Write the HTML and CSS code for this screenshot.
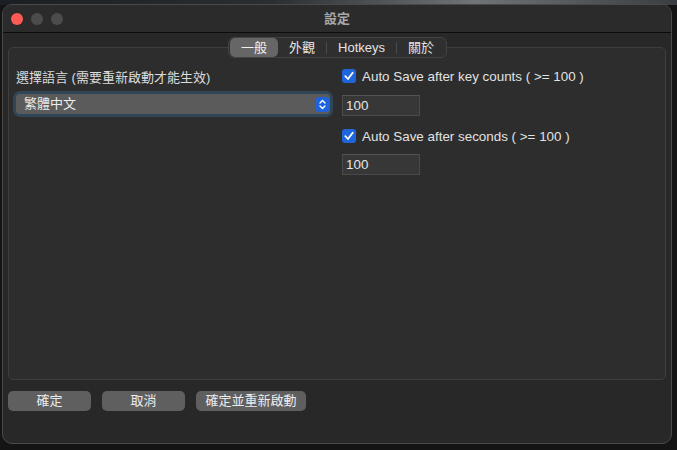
FILE: index.html
```html
<!DOCTYPE html>
<html lang="zh-Hant">
<head>
<meta charset="utf-8">
<title>設定</title>
<link rel="stylesheet" href="styles.css">
</head>
<body>
<div class="desktop">
  <div class="window">
    <div class="titlebar">
      <div class="lights">
        <span class="light red"></span>
        <span class="light grey"></span>
        <span class="light grey"></span>
      </div>
      <div class="title">設定</div>
    </div>
    <div class="content">
      <div class="tabs">
        <span class="tab active">一般</span>
        <span class="tab">外觀</span>
        <span class="sep"></span>
        <span class="tab">Hotkeys</span>
        <span class="sep"></span>
        <span class="tab">關於</span>
      </div>
      <div class="group">
        <div class="col-left">
          <div class="label">選擇語言 (需要重新啟動才能生效)</div>
          <div class="select">
            <span class="select-text">繁體中文</span>
            <span class="stepper">
              <svg width="13" height="15" viewBox="0 0 13 15">
                <rect x="0" y="0" width="13" height="15" rx="3" fill="#1f63dc"/>
                <path d="M4 6 L6.5 3.5 L9 6" fill="none" stroke="#fff" stroke-width="1.4" stroke-linecap="round" stroke-linejoin="round"/>
                <path d="M4 9 L6.5 11.5 L9 9" fill="none" stroke="#fff" stroke-width="1.4" stroke-linecap="round" stroke-linejoin="round"/>
              </svg>
            </span>
          </div>
        </div>
        <div class="col-right">
          <label class="check-row">
            <span class="checkbox">
              <svg width="14" height="14" viewBox="0 0 14 14">
                <rect x="0" y="0" width="14" height="14" rx="3" fill="#1f66dc"/>
                <path d="M3.3 7.2 L6 10 L10.7 3.8" fill="none" stroke="#fff" stroke-width="1.8" stroke-linecap="round" stroke-linejoin="round"/>
              </svg>
            </span>
            <span>Auto Save after key counts ( &gt;= 100 )</span>
          </label>
          <div class="field first">100</div>
          <label class="check-row second">
            <span class="checkbox">
              <svg width="14" height="14" viewBox="0 0 14 14">
                <rect x="0" y="0" width="14" height="14" rx="3" fill="#1f66dc"/>
                <path d="M3.3 7.2 L6 10 L10.7 3.8" fill="none" stroke="#fff" stroke-width="1.8" stroke-linecap="round" stroke-linejoin="round"/>
              </svg>
            </span>
            <span>Auto Save after seconds ( &gt;= 100 )</span>
          </label>
          <div class="field">100</div>
        </div>
      </div>
      <div class="buttons">
        <button class="btn w83">確定</button>
        <button class="btn w83">取消</button>
        <button class="btn w110">確定並重新啟動</button>
      </div>
    </div>
  </div>
</div>
</body>
</html>
```

FILE: styles.css
```css
* { box-sizing: border-box; }
html, body {
  margin: 0;
  padding: 0;
  width: 677px;
  height: 450px;
  overflow: hidden;
  background: #141414;
  font-family: "Liberation Sans", "Noto Sans CJK TC", sans-serif;
  font-size: 13px;
  color: #dedede;
}
.desktop {
  width: 677px;
  height: 450px;
  padding: 4px 0 0 2px;
  background: linear-gradient(90deg, #1b1f24 0%, #2a2d31 40%, #6f7479 70%, #3a3d41 100%) top / 100% 5px no-repeat, #141414;
}
.window {
  width: 670px;
  height: 440px;
  background: #282828;
  border-radius: 10px;
  border: 1px solid #4a4a4a;
  overflow: hidden;
  display: flex;
  flex-direction: column;
}
.titlebar {
  height: 28px;
  flex: none;
  background: #2b2b2b;
  border-bottom: 1px solid #0c0c0c;
  display: flex;
  align-items: center;
  position: relative;
}
.lights {
  display: flex;
  gap: 8px;
  padding-left: 8px;
  padding-top: 0;
}
.light {
  width: 12px;
  height: 12px;
  border-radius: 50%;
  display: block;
}
.light.red { background: #fe5b55; }
.light.grey { background: #4c4c4c; }
.title {
  position: absolute;
  left: 0;
  right: 0;
  top: 0;
  bottom: 2px;
  display: flex;
  align-items: center;
  justify-content: center;
  color: #a9a9a9;
  font-size: 13px;
  font-weight: 600;
}
.content {
  flex: 1;
  display: flex;
  flex-direction: column;
  padding: 4px 5px 0 5px;
}
.tabs {
  align-self: center;
  position: relative;
  z-index: 1;
  display: flex;
  align-items: center;
  height: 21px;
  padding: 0 1px;
  background: #2f2f2f;
  border: 1px solid #434343;
  border-radius: 6px;
  margin-left: 1px;
}
.tab {
  height: 19px;
  line-height: 19px;
  padding: 0 11px;
  color: #e4e4e4;
  font-size: 13px;
  border-radius: 5px;
}
.tab.active {
  background: #666666;
  color: #f0f0f0;
}
.sep {
  width: 1px;
  height: 12px;
  background: #4a4a4a;
}
.group {
  margin-top: -11px;
  height: 333px;
  background: #2d2d2d;
  border: 1px solid #3e3e3e;
  border-radius: 5px;
  display: grid;
  grid-template-columns: 326px 1fr;
  padding: 22px 0 0 7px;
}
.label {
  height: 16px;
  line-height: 16px;
  color: #dcdcdc;
  white-space: nowrap;
}
.select {
  margin-top: 8px;
  width: 314px;
  height: 20px;
  background: #5b5b5b;
  border-radius: 4px;
  box-shadow: 0 0 0 3px #2f4658;
  display: flex;
  align-items: center;
  justify-content: space-between;
  padding: 0 1px 0 8px;
  color: #ececec;
}
.select-text { line-height: 20px; }
.stepper { display: flex; }
.check-row {
  display: flex;
  align-items: center;
  gap: 6px;
  height: 16px;
  margin-top: -2px;
  color: #e2e2e2;
  white-space: nowrap;
  font-size: 13.4px;
}
.checkbox { display: flex; }
.field {
  width: 78px;
  height: 21px;
  background: #373737;
  border: 1px solid #4a4a4a;
  border-top-color: #555;
  line-height: 19px;
  padding-left: 3px;
  color: #e6e6e6;
  font-size: 13.4px;
}
.field.first { margin-top: 11px; }
.check-row.second { margin-top: 12px; }
.check-row.second + .field { margin-top: 10px; }
.buttons {
  margin-top: 11px;
  display: flex;
  gap: 11px;
}
.btn {
  height: 20px;
  border: none;
  border-radius: 5px;
  background: #5f5f5f;
  color: #ececec;
  font-family: "Liberation Sans", "Noto Sans CJK TC", sans-serif;
  font-size: 13px;
  padding: 0;
  line-height: 20px;
}
.w83 { width: 83px; }
.w110 { width: 110px; }
```
